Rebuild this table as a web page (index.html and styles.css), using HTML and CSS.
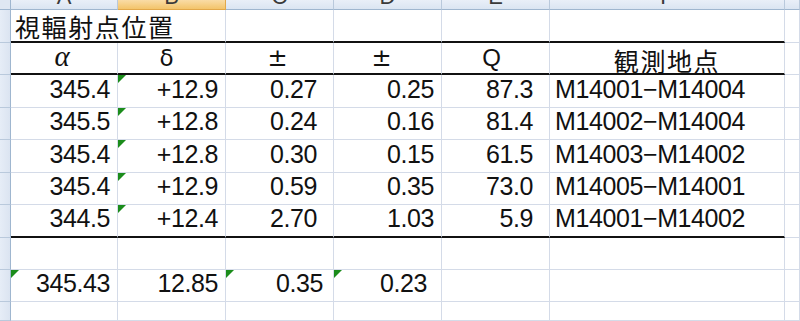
FILE: index.html
```html
<!DOCTYPE html>
<html lang="ja">
<head>
<meta charset="utf-8">
<title>視輻射点位置</title>
<link rel="stylesheet" href="styles.css">
</head>
<body>
<div class="sheet">
  <!-- column header row -->
  <div class="ch corner"></div>
  <div class="ch"><span>A</span></div>
  <div class="ch sel"><span>B</span></div>
  <div class="ch"><span>C</span></div>
  <div class="ch"><span>D</span></div>
  <div class="ch"><span>E</span></div>
  <div class="ch"><span>F</span></div>
  <div class="ch"></div>

  <!-- row 1 -->
  <div class="rh"></div>
  <div class="c span2 tb title">視輻射点位置</div>
  <div class="c tb"></div>
  <div class="c tb"></div>
  <div class="c tb"></div>
  <div class="c tb"></div>
  <div class="c"></div>

  <!-- row 2 -->
  <div class="rh"></div>
  <div class="c tb ctr"><span class="alpha">α</span></div>
  <div class="c tb ctr"><span class="delta">δ</span></div>
  <div class="c tb ctr"><span class="pm">±</span></div>
  <div class="c tb ctr"><span class="pm pmd">±</span></div>
  <div class="c tb ctr"><span class="q">Q</span></div>
  <div class="c tb ctr jp">観測地点</div>
  <div class="c"></div>

  <!-- row 3 -->
  <div class="rh"></div>
  <div class="c num">345.4</div>
  <div class="c num err">+12.9</div>
  <div class="c num pc">0.27</div>
  <div class="c num">0.25</div>
  <div class="c num pe">87.3</div>
  <div class="c stn">M14001−M14004</div>
  <div class="c"></div>

  <!-- row 4 -->
  <div class="rh"></div>
  <div class="c num">345.5</div>
  <div class="c num err">+12.8</div>
  <div class="c num pc">0.24</div>
  <div class="c num">0.16</div>
  <div class="c num pe">81.4</div>
  <div class="c stn">M14002−M14004</div>
  <div class="c"></div>

  <!-- row 5 -->
  <div class="rh"></div>
  <div class="c num">345.4</div>
  <div class="c num err">+12.8</div>
  <div class="c num pc">0.30</div>
  <div class="c num">0.15</div>
  <div class="c num pe">61.5</div>
  <div class="c stn">M14003−M14002</div>
  <div class="c"></div>

  <!-- row 6 -->
  <div class="rh"></div>
  <div class="c num">345.4</div>
  <div class="c num err">+12.9</div>
  <div class="c num pc">0.59</div>
  <div class="c num">0.35</div>
  <div class="c num pe">73.0</div>
  <div class="c stn">M14005−M14001</div>
  <div class="c"></div>

  <!-- row 7 -->
  <div class="rh"></div>
  <div class="c num tb">344.5</div>
  <div class="c num tb err">+12.4</div>
  <div class="c num tb pc">2.70</div>
  <div class="c num tb">1.03</div>
  <div class="c num tb pe">5.9</div>
  <div class="c stn tb">M14001−M14002</div>
  <div class="c"></div>

  <!-- row 8 -->
  <div class="rh"></div>
  <div class="c"></div>
  <div class="c"></div>
  <div class="c"></div>
  <div class="c"></div>
  <div class="c"></div>
  <div class="c"></div>
  <div class="c"></div>

  <!-- row 9 -->
  <div class="rh"></div>
  <div class="c num err">345.43</div>
  <div class="c num">12.85</div>
  <div class="c num err pc9">0.35</div>
  <div class="c num err pd9">0.23</div>
  <div class="c"></div>
  <div class="c"></div>
  <div class="c"></div>

  <!-- row 10 -->
  <div class="rh"></div>
  <div class="c"></div>
  <div class="c"></div>
  <div class="c"></div>
  <div class="c"></div>
  <div class="c"></div>
  <div class="c"></div>
  <div class="c"></div>
</div>
</body>
</html>
```

FILE: styles.css
```css
* { box-sizing: border-box; }

html, body {
  margin: 0;
  padding: 0;
  background: #ffffff;
}

body {
  width: 800px;
  height: 321px;
  overflow: hidden;
  font-family: "Liberation Sans", "Noto Sans CJK JP", sans-serif;
  color: #111;
}

.sheet {
  display: grid;
  grid-template-columns: 11px 107px 108px 108px 108px 108px 235px 15px;
  grid-template-rows: 10px 33px 32px 33px 32px 33px 32px 33px 32px 32px 19px;
  width: 800px;
}

/* column header band */
.ch {
  background: linear-gradient(#e9eff8, #dbe5f2);
  border-right: 1px solid #b9c9dc;
  border-bottom: 1px solid #9fb6cf;
  display: flex;
  justify-content: center;
  align-items: flex-end;
  overflow: hidden;
  padding-bottom: 1px;
}
.ch span {
  font-size: 22px;
  line-height: 1;
  color: #3a3a3a;
}
.ch.corner {
  background: #dfe7f2;
  border-right: 1px solid #9fb6cf;
}
.ch.sel {
  background: linear-gradient(#f9dca6, #f3c46a);
  border-right: 1px solid #e2a84a;
  border-bottom: 1px solid #e2a84a;
}

/* row header */
.rh {
  background: linear-gradient(90deg, #e6edf7, #dbe4f1);
  border-right: 1px solid #9fb6cf;
  border-bottom: 1px solid #b9c9dc;
}

/* cells */
.c {
  position: relative;
  border-right: 1px solid #d4dbe8;
  border-bottom: 1px solid #d4dbe8;
  font-size: 25px;
  line-height: 1;
  display: flex;
  align-items: flex-end;
  white-space: nowrap;
  padding-bottom: 5px;
}
.span2 { grid-column: span 2; }

.tb { border-bottom: 2px solid #111; }

.title {
  font-family: "Noto Sans CJK JP", sans-serif;
  font-size: 25px;
  letter-spacing: 1.6px;
  padding-left: 4px;
  padding-bottom: 2px;
  line-height: 1;
}

.ctr { justify-content: center; padding-bottom: 3px; }

.jp {
  font-family: "Noto Sans CJK JP", sans-serif;
  font-size: 25px;
  letter-spacing: 1.6px;
  padding-bottom: 0;
  line-height: 1;
}

.alpha {
  font-family: "Liberation Serif", serif;
  font-style: italic;
  font-size: 29px;
  line-height: 0.8;
  margin-left: -4px;
  margin-bottom: 2px;
}
.delta {
  font-family: "DejaVu Sans", sans-serif;
  font-size: 23px;
  margin-right: 10px;
}
.pm {
  font-family: "DejaVu Sans", sans-serif;
  font-size: 24px;
  margin-right: 4px;
}
.pmd { margin-right: 12px; }
.q {
  font-size: 24px;
  margin-right: 8px;
}

.num {
  justify-content: flex-end;
  padding-right: 7px;
  letter-spacing: -0.4px;
}
.pc { padding-right: 16px; }
.pe { padding-right: 16px; }
.pc9 { padding-right: 10px; }
.pd9 { padding-right: 14px; }

.stn {
  padding-left: 5px;
  letter-spacing: -0.4px;
}

/* green error indicator */
.err::before {
  content: "";
  position: absolute;
  top: 0;
  left: 0;
  width: 0;
  height: 0;
  border-top: 8px solid #1b8c1b;
  border-right: 8px solid transparent;
}
```
